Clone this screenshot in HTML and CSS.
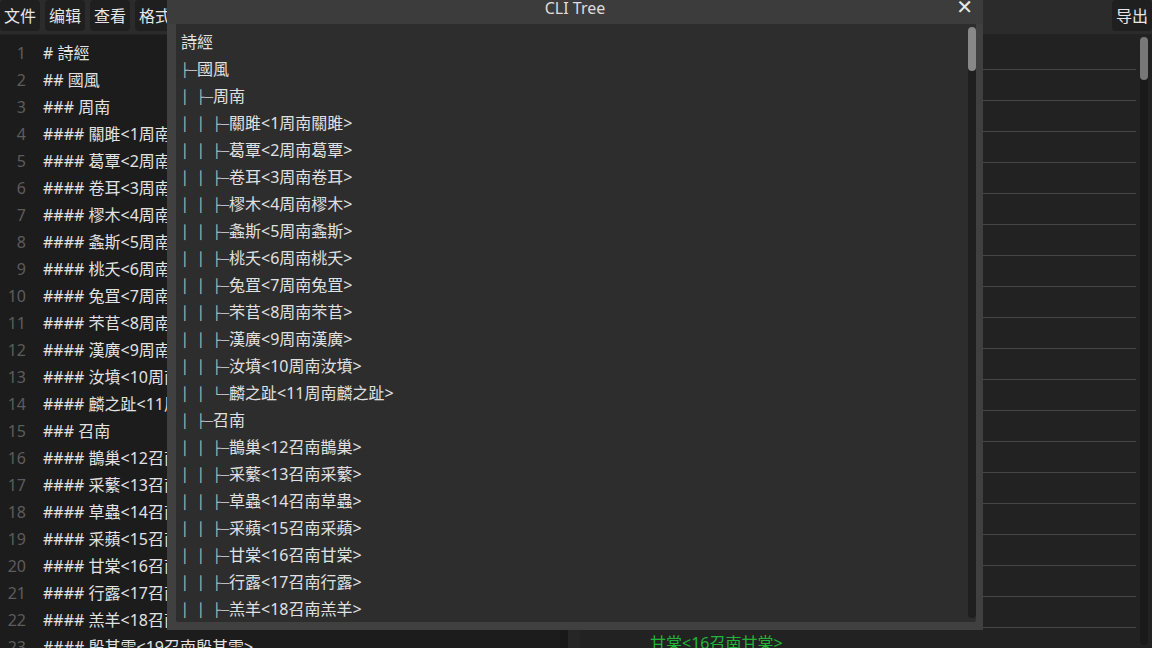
FILE: index.html
```html
<!DOCTYPE html>
<html lang="zh">
<head>
<meta charset="utf-8">
<title>CLI Tree</title>
<link rel="stylesheet" href="styles.css">
</head>
<body>
<div class="app">
  <div class="topbar">
    <div class="menus">
      <button class="btn">文件</button>
      <button class="btn">编辑</button>
      <button class="btn">查看</button>
      <button class="btn">格式</button>
    </div>
    <button class="btn">导出</button>
  </div>
  <div class="main">
    <div class="editor">
      <div class="lines">
        <div class="ln"><span class="num">1</span><span class="code"># 詩經</span></div>
        <div class="ln"><span class="num">2</span><span class="code">## 國風</span></div>
        <div class="ln"><span class="num">3</span><span class="code">### 周南</span></div>
        <div class="ln"><span class="num">4</span><span class="code">#### 關雎&lt;1周南關雎&gt;</span></div>
        <div class="ln"><span class="num">5</span><span class="code">#### 葛覃&lt;2周南葛覃&gt;</span></div>
        <div class="ln"><span class="num">6</span><span class="code">#### 卷耳&lt;3周南卷耳&gt;</span></div>
        <div class="ln"><span class="num">7</span><span class="code">#### 樛木&lt;4周南樛木&gt;</span></div>
        <div class="ln"><span class="num">8</span><span class="code">#### 螽斯&lt;5周南螽斯&gt;</span></div>
        <div class="ln"><span class="num">9</span><span class="code">#### 桃夭&lt;6周南桃夭&gt;</span></div>
        <div class="ln"><span class="num">10</span><span class="code">#### 兔罝&lt;7周南兔罝&gt;</span></div>
        <div class="ln"><span class="num">11</span><span class="code">#### 芣苢&lt;8周南芣苢&gt;</span></div>
        <div class="ln"><span class="num">12</span><span class="code">#### 漢廣&lt;9周南漢廣&gt;</span></div>
        <div class="ln"><span class="num">13</span><span class="code">#### 汝墳&lt;10周南汝墳&gt;</span></div>
        <div class="ln"><span class="num">14</span><span class="code">#### 麟之趾&lt;11周南麟之趾&gt;</span></div>
        <div class="ln"><span class="num">15</span><span class="code">### 召南</span></div>
        <div class="ln"><span class="num">16</span><span class="code">#### 鵲巢&lt;12召南鵲巢&gt;</span></div>
        <div class="ln"><span class="num">17</span><span class="code">#### 采蘩&lt;13召南采蘩&gt;</span></div>
        <div class="ln"><span class="num">18</span><span class="code">#### 草蟲&lt;14召南草蟲&gt;</span></div>
        <div class="ln"><span class="num">19</span><span class="code">#### 采蘋&lt;15召南采蘋&gt;</span></div>
        <div class="ln"><span class="num">20</span><span class="code">#### 甘棠&lt;16召南甘棠&gt;</span></div>
        <div class="ln"><span class="num">21</span><span class="code">#### 行露&lt;17召南行露&gt;</span></div>
        <div class="ln"><span class="num">22</span><span class="code">#### 羔羊&lt;18召南羔羊&gt;</span></div>
        <div class="ln"><span class="num">23</span><span class="code">#### 殷其雷&lt;19召南殷其雷&gt;</span></div>
      </div>
      <div class="vscroll"></div>
    </div>
    <div class="splitter"></div>
    <div class="preview">
      <div class="items">
        <div class="item">關雎&lt;1周南關雎&gt;</div>
        <div class="item">葛覃&lt;2周南葛覃&gt;</div>
        <div class="item">卷耳&lt;3周南卷耳&gt;</div>
        <div class="item">樛木&lt;4周南樛木&gt;</div>
        <div class="item">螽斯&lt;5周南螽斯&gt;</div>
        <div class="item">桃夭&lt;6周南桃夭&gt;</div>
        <div class="item">兔罝&lt;7周南兔罝&gt;</div>
        <div class="item">芣苢&lt;8周南芣苢&gt;</div>
        <div class="item">漢廣&lt;9周南漢廣&gt;</div>
        <div class="item">汝墳&lt;10周南汝墳&gt;</div>
        <div class="item">麟之趾&lt;11周南麟之趾&gt;</div>
        <div class="item">鵲巢&lt;12召南鵲巢&gt;</div>
        <div class="item">采蘩&lt;13召南采蘩&gt;</div>
        <div class="item">草蟲&lt;14召南草蟲&gt;</div>
        <div class="item">采蘋&lt;15召南采蘋&gt;</div>
        <div class="item">行露&lt;17召南行露&gt;</div>
        <div class="item">羔羊&lt;18召南羔羊&gt;</div>
        <div class="item">殷其雷&lt;19召南殷其雷&gt;</div>
        <div class="item">摽有梅&lt;20召南摽有梅&gt;</div>
        <div class="item active">甘棠&lt;16召南甘棠&gt;</div>
      </div>
      <div class="pscroll"><div class="thumb"></div></div>
    </div>
  </div>

  <div class="dialog">
    <div class="dtitle">
      <span class="dname">CLI Tree</span>
      <span class="close">✕</span>
    </div>
    <div class="dbody">
      <div class="tree">
        <div class="row">詩經</div>
        <div class="row"><span class="g">├─</span>國風</div>
        <div class="row"><span class="g">│ ├─</span>周南</div>
        <div class="row"><span class="g">│ │ ├─</span>關雎&lt;1周南關雎&gt;</div>
        <div class="row"><span class="g">│ │ ├─</span>葛覃&lt;2周南葛覃&gt;</div>
        <div class="row"><span class="g">│ │ ├─</span>卷耳&lt;3周南卷耳&gt;</div>
        <div class="row"><span class="g">│ │ ├─</span>樛木&lt;4周南樛木&gt;</div>
        <div class="row"><span class="g">│ │ ├─</span>螽斯&lt;5周南螽斯&gt;</div>
        <div class="row"><span class="g">│ │ ├─</span>桃夭&lt;6周南桃夭&gt;</div>
        <div class="row"><span class="g">│ │ ├─</span>兔罝&lt;7周南兔罝&gt;</div>
        <div class="row"><span class="g">│ │ ├─</span>芣苢&lt;8周南芣苢&gt;</div>
        <div class="row"><span class="g">│ │ ├─</span>漢廣&lt;9周南漢廣&gt;</div>
        <div class="row"><span class="g">│ │ ├─</span>汝墳&lt;10周南汝墳&gt;</div>
        <div class="row"><span class="g">│ │ └─</span>麟之趾&lt;11周南麟之趾&gt;</div>
        <div class="row"><span class="g">│ ├─</span>召南</div>
        <div class="row"><span class="g">│ │ ├─</span>鵲巢&lt;12召南鵲巢&gt;</div>
        <div class="row"><span class="g">│ │ ├─</span>采蘩&lt;13召南采蘩&gt;</div>
        <div class="row"><span class="g">│ │ ├─</span>草蟲&lt;14召南草蟲&gt;</div>
        <div class="row"><span class="g">│ │ ├─</span>采蘋&lt;15召南采蘋&gt;</div>
        <div class="row"><span class="g">│ │ ├─</span>甘棠&lt;16召南甘棠&gt;</div>
        <div class="row"><span class="g">│ │ ├─</span>行露&lt;17召南行露&gt;</div>
        <div class="row"><span class="g">│ │ ├─</span>羔羊&lt;18召南羔羊&gt;</div>
      </div>
      <div class="dscroll"><div class="thumb"></div></div>
    </div>
  </div>
</div>
</body>
</html>
```

FILE: styles.css
```css
* { box-sizing: border-box; }
html, body { margin: 0; padding: 0; }
body {
  width: 1152px;
  height: 648px;
  overflow: hidden;
  background: #1e1e1e;
  font-family: "Noto Sans", "Noto Sans CJK SC", sans-serif;
  font-size: 16px;
  color: #e2e2e2;
}
.app { position: relative; width: 1152px; height: 648px; display: flex; flex-direction: column; }

.topbar {
  height: 35px;
  flex: none;
  background: #2b2b2b;
  display: flex;
  justify-content: space-between;
  align-items: flex-start;
  border-bottom: 1px solid #232323;
}
.menus { display: flex; gap: 5px; }
.btn {
  height: 31px;
  padding: 1px 4px 0 4px;
  border: none;
  border-radius: 4px;
  background: #1f1f1f;
  color: #e6e6e6;
  font-family: inherit;
  font-size: 16px;
  line-height: 31px;
}

.main { flex: 1; display: flex; min-height: 0; }
.editor {
  width: 568px;
  flex: none;
  background: #1c1c1c;
  display: flex;
  overflow: hidden;
}
.lines { flex: 1; padding-top: 5px; }
.ln { height: 27px; line-height: 27px; display: flex; white-space: nowrap; }
.num { width: 26px; text-align: right; color: #5c5c5c; flex: none; }
.code { padding-left: 17px; color: #e2e2e2; }
.vscroll { width: 8px; background: #181818; flex: none; }
.splitter { width: 12px; flex: none; background: #262626; }

.preview {
  flex: 1;
  background: #222222;
  display: flex;
  padding-left: 10px;
}
.items { flex: 1; padding-top: 4px; }
.item {
  height: 31px;
  line-height: 30px;
  border-bottom: 1px solid #464646;
  padding-left: 60px;
  color: #d8d8d8;
  white-space: nowrap;
}
.item.active { color: #22b33a; border-bottom: none; }
.pscroll {
  width: 8px;
  margin: 2px 4px 3px 4px;
  background: #1a1a1a;
  border-radius: 4px;
  flex: none;
}
.pscroll .thumb { height: 43px; background: #787878; border-radius: 4px; }

.dialog {
  position: absolute;
  left: 167px;
  top: 0;
  width: 816px;
  height: 630px;
  background: #404040;
  display: flex;
  flex-direction: column;
  padding: 0 7px 8px 9px;
}
.dtitle {
  height: 24px;
  flex: none;
  position: relative;
  text-align: center;
  line-height: 16px;
  background: #3c3c3c;
  margin: 0 -7px 0 -9px;
}
.dname { font-size: 16px; color: #dcdcdc; }
.close {
  position: absolute;
  right: 10px;
  top: -1px;
  font-size: 20px;
  font-weight: bold;
  color: #e8e8e8;
  font-family: "DejaVu Sans", sans-serif;
}
.dbody {
  flex: 1;
  background: #2d2d2d;
  display: flex;
  overflow: hidden;
  border-radius: 0 0 2px 2px;
}
.tree { flex: 1; padding: 5px 0 0 5px; overflow: hidden; }
.row { height: 27px; line-height: 27px; white-space: nowrap; color: #e0e0e0; }
.g {
  font-family: "DejaVu Sans Mono", monospace;
  font-size: 13.3px;
  color: #bdbdbd;
}
.dscroll {
  width: 8px;
  margin: 3px 0 4px 0;
  background: #1f1f1f;
  border-radius: 4px;
  flex: none;
}
.dscroll .thumb { height: 44px; background: #888888; border-radius: 4px; }
```
